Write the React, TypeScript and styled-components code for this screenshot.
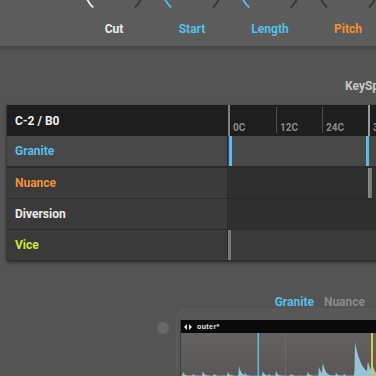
import React from 'react';
import styled, { createGlobalStyle } from 'styled-components';

const Global = createGlobalStyle`
  html, body { margin: 0; padding: 0; background: #545454; overflow: hidden; }
  body { width: 376px; height: 376px; font-family: Roboto, "Liberation Sans", sans-serif; }
  #root { width: 376px; height: 376px; overflow: hidden; }
`;

const BLUE = '#56bfe8';
const ORANGE = '#f2912f';
const LIME = '#c9e634';

const Page = styled.div`
  width: 376px;
  height: 376px;
  overflow: hidden;
  background: #545454;
  display: flex;
  flex-direction: column;
`;

const TopPanel = styled.div`
  flex: none;
  height: 46px;
  background: #5c5c5c;
  border-bottom: 2px solid #474747;
  box-shadow: 0 1px 2px rgba(0, 0, 0, 0.2);
  display: flex;
  padding-left: 75px;
`;

const Knob = styled.div`
  width: 78px;
  display: flex;
  flex-direction: column;
  align-items: center;
`;

const KnobLabel = styled.div<{ $color: string }>`
  font-size: 12px;
  line-height: 14px;
  font-weight: 700;
  color: ${(p) => p.$color};
`;

const KeyRow = styled.div`
  flex: none;
  padding: 31px 0 0 345px;
  height: 14px;
  font-size: 12px;
  line-height: 14px;
  font-weight: 700;
  color: #c6c6c6;
  white-space: nowrap;
`;

const Table = styled.div`
  flex: none;
  margin: 12px 0 0 7px;
  width: 420px;
  box-shadow: 0 2px 3px rgba(0, 0, 0, 0.35), -1px 0 2px rgba(0, 0, 0, 0.25);
`;

const HeaderRow = styled.div`
  display: grid;
  grid-template-columns: 221px 1fr;
  height: 31px;
  background: #1e1e1e;
`;

const HeaderName = styled.div`
  display: flex;
  align-items: center;
  padding-left: 8px;
  font-size: 12px;
  font-weight: 700;
  color: #f0f0f0;
`;

const Ruler = styled.div`
  display: flex;
  border-left: 2px solid #7e7e7e;
`;

const Tick = styled.div<{ $first?: boolean; $hi?: boolean }>`
  flex: none;
  width: ${(p) => (p.$hi ? '45px' : '46px')};
  margin: ${(p) => (p.$hi ? '0' : '2px 0 3px')};
  border-left: ${(p) => (p.$first ? 'none' : p.$hi ? '2px solid #9a9a9a' : '1px solid #4e4e4e')};
  padding-left: 3px;
  padding-bottom: ${(p) => (p.$hi ? '3px' : '0')};
  box-sizing: border-box;
  display: flex;
  align-items: flex-end;
  font-size: 10px;
  line-height: 11px;
  font-weight: 700;
  color: #8a8a8a;
`;

const Row = styled.div<{ $thick?: boolean }>`
  display: grid;
  grid-template-columns: 221px 1fr;
  height: 30px;
  border-bottom: ${(p) => (p.$thick ? 2 : 1)}px solid #2a2a2a;
`;

const NameCell = styled.div<{ $bg: string; $color: string }>`
  display: flex;
  align-items: center;
  padding-left: 8px;
  background: ${(p) => p.$bg};
  border-right: 1px solid #2b2b2b;
  font-size: 12px;
  font-weight: 700;
  color: ${(p) => p.$color};
`;

const RangeCell = styled.div<{ $bg: string }>`
  position: relative;
  background: ${(p) => p.$bg};
`;

const Bar = styled.div<{ $color: string }>`
  position: absolute;
  top: 0;
  bottom: 0;
  background: ${(p) => p.$color};
`;

const Tabs = styled.div`
  flex: none;
  margin-top: 34px;
  height: 14px;
  display: flex;
  justify-content: flex-end;
  gap: 10px;
  padding-right: 11px;
  font-size: 12px;
  line-height: 14px;
  font-weight: 700;
`;

const Tab = styled.span<{ $active?: boolean }>`
  color: ${(p) => (p.$active ? BLUE : '#8a8a8a')};
`;

const Bottom = styled.div`
  flex: 1;
  display: flex;
  min-height: 0;
`;

const Dot = styled.div`
  flex: none;
  width: 12px;
  height: 12px;
  border-radius: 50%;
  background: #686868;
  margin: 13px 0 0 157px;
`;

const Panel = styled.div`
  flex: 1;
  margin-left: 7px;
  padding: 11px 0 0 4px;
  border-radius: 10px 0 0 0;
  background: #575757;
  box-shadow: inset 1px 1px 0 rgba(255, 255, 255, 0.03);
  overflow: hidden;
`;

const Window = styled.div`
  display: flex;
  flex-direction: column;
  border-left: 1px solid #3e3e3e;
`;

const WinHeader = styled.div`
  height: 13px;
  background: #0a0a0a;
  display: flex;
  align-items: center;
  gap: 5px;
  padding-left: 3px;
  font-family: "Liberation Sans", sans-serif;
  font-size: 7px;
  font-weight: 700;
  letter-spacing: 0.4px;
  color: #e8e8e8;
`;

const Wave = styled.div`
  height: 43px;
  background: linear-gradient(#636060, #5a5757);
`;

function pt(cx: number, cy: number, r: number, deg: number) {
  const a = (deg * Math.PI) / 180;
  return [cx + r * Math.sin(a), cy - r * Math.cos(a)];
}

function arc(a0: number, a1: number) {
  const cx = 39, cy = -14, r = 30;
  const [x0, y0] = pt(cx, cy, r, a0);
  const [x1, y1] = pt(cx, cy, r, a1);
  const large = a1 - a0 > 180 ? 1 : 0;
  return `M${x0.toFixed(2)} ${y0.toFixed(2)} A${r} ${r} 0 ${large} 1 ${x1.toFixed(2)} ${y1.toFixed(2)}`;
}

type KnobDef = { label: string; color: string; from: number; to: number };

const knobs: KnobDef[] = [
  { label: 'Cut', color: '#ececec', from: -136, to: -20 },
  { label: 'Start', color: BLUE, from: -136, to: -60 },
  { label: 'Length', color: BLUE, from: -136, to: -40 },
  { label: 'Pitch', color: ORANGE, from: 0, to: 40 },
];

const KnobDial: React.FC<{ k: KnobDef }> = ({ k }) => (
  <svg width="78" height="22" viewBox="0 0 78 22">
    <path d={arc(-136, 136)} fill="none" stroke="#363636" strokeWidth="2" />
    <path d={arc(k.from, k.to)} fill="none" stroke={k.color} strokeWidth="2" />
  </svg>
);

type RowDef = {
  name: string;
  color: string;
  left: string;
  right: string;
  bars: { x: number; w: number; c: string }[];
};

const rows: RowDef[] = [
  {
    name: 'Granite',
    color: BLUE,
    left: '#474747',
    right: '#474747',
    bars: [
      { x: 1, w: 3, c: BLUE },
      { x: 138, w: 3, c: BLUE },
    ],
  },
  {
    name: 'Nuance',
    color: ORANGE,
    left: '#3a3a3a',
    right: '#2f2f2f',
    bars: [{ x: 140, w: 4, c: 'linear-gradient(90deg,#8c8c8c,#6e6e6e)' }],
  },
  { name: 'Diversion', color: '#ececec', left: '#3a3a3a', right: '#2f2f2f', bars: [] },
  {
    name: 'Vice',
    color: LIME,
    left: '#3a3a3a',
    right: '#3a3a3a',
    bars: [{ x: 0, w: 3, c: '#7a7a7a' }],
  },
];

const spikes: [number, number, number][] = [
  [2, 4, 1.5],
  [12, 2, 1],
  [21.7, 5, 1.5],
  [33, 2, 1],
  [46.7, 4, 1.5],
  [58, 10, 2],
  [64, 3, 1],
  [81.7, 5, 1.5],
  [88, 2, 1],
  [95, 5, 1.5],
  [110, 2, 1],
  [126.7, 4, 1.5],
  [138, 9, 2.5],
  [141.7, 12, 2.5],
  [155, 3, 1.5],
  [163, 2, 1],
  [174, 34, 6],
  [186.7, 11, 3],
  [192, 6, 2],
];

function wavePath() {
  const W = 196, H = 43;
  let d = `M0 ${H}`;
  for (let x = 0; x <= W; x += 0.5) {
    let v = 0.2 + 0.4 * Math.abs(Math.sin(x * 1.7) * Math.cos(x * 0.37));
    for (const [x0, h, dec] of spikes) {
      if (x >= x0 - 0.6 && x < x0) v += h * (1 - (x0 - x) / 0.6);
      else if (x >= x0) v += h * Math.exp(-(x - x0) / dec);
    }
    d += ` L${x} ${(H - v).toFixed(2)}`;
  }
  d += ` L${W} ${H} Z`;
  return d;
}

const WAVE = wavePath();

export default function App() {
  return (
    <Page>
      <Global />
      <TopPanel>
        {knobs.map((k) => (
          <Knob key={k.label}>
            <KnobDial k={k} />
            <KnobLabel $color={k.color}>{k.label}</KnobLabel>
          </Knob>
        ))}
      </TopPanel>
      <KeyRow>KeySplit</KeyRow>
      <Table>
        <HeaderRow>
          <HeaderName>C-2 / B0</HeaderName>
          <Ruler>
            <Tick $first>0C</Tick>
            <Tick>12C</Tick>
            <Tick>24C</Tick>
            <Tick $hi>36C</Tick>
            <Tick>48C</Tick>
          </Ruler>
        </HeaderRow>
        {rows.map((r, i) => (
          <Row key={r.name} $thick={i === 0}>
            <NameCell $bg={r.left} $color={r.color}>
              {r.name}
            </NameCell>
            <RangeCell $bg={r.right}>
              {r.bars.map((b, j) => (
                <Bar key={j} $color={b.c} style={{ left: b.x, width: b.w }} />
              ))}
            </RangeCell>
          </Row>
        ))}
      </Table>
      <Tabs>
        <Tab $active>Granite</Tab>
        <Tab>Nuance</Tab>
      </Tabs>
      <Bottom>
        <Dot />
        <Panel>
          <Window>
            <WinHeader>
              <svg width="8" height="6" viewBox="0 0 8 6">
                <path d="M0 3 L3 0 L3 6 Z" fill="#e0e0e0" />
                <path d="M8 3 L5 0 L5 6 Z" fill="#e0e0e0" />
              </svg>
              <span>outer*</span>
            </WinHeader>
            <Wave>
              <svg width="196" height="43" viewBox="0 0 196 43">
                <rect x="104" y="0" width="1" height="43" fill="#6c6969" />
                <path d={WAVE} fill="#9fd0e6" opacity="0.9" />
                <rect x="76.5" y="0" width="1.5" height="43" fill={BLUE} />
                <rect x="190" y="0" width="2" height="43" fill="#e2c24c" />
              </svg>
            </Wave>
          </Window>
        </Panel>
      </Bottom>
    </Page>
  );
}
